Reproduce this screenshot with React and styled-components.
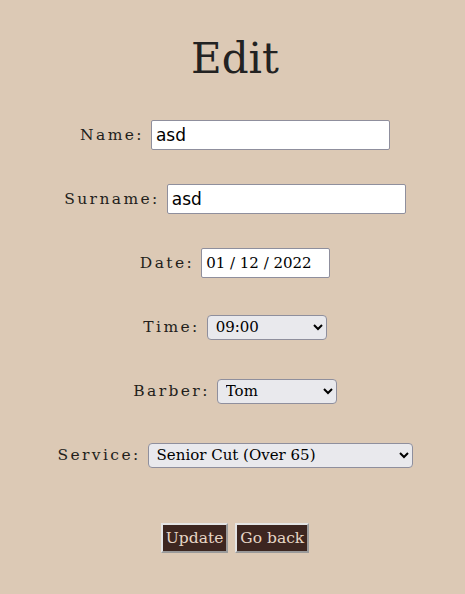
import React from 'react';
import styled, { createGlobalStyle } from 'styled-components';

const GlobalStyle = createGlobalStyle`
	body {
		margin: 0;
		background-color: #dcc9b5;
		font-family: 'DejaVu Serif', 'Liberation Serif', serif;
	}
`;

const Page = styled.div`
	display: flex;
	flex-direction: column;
	align-items: center;
	padding: 33px 0 0 5px;
`;

const Title = styled.h1`
	margin: 0 0 36px;
	font-size: 42px;
	font-weight: 400;
	line-height: 51px;
	color: #222;
`;

const Form = styled.form`
	display: flex;
	flex-direction: column;
	align-items: center;
	gap: 34px;
`;

const Row = styled.div`
	display: flex;
	align-items: center;
	justify-content: center;
	gap: 7px;
	height: 30px;
`;

const Label = styled.label`
	font-size: 15.5px;
	letter-spacing: 2.4px;
	color: #231e1b;
`;

const TextInput = styled.input`
	box-sizing: border-box;
	width: ${(p) => p.$w}px;
	height: 30px;
	padding: 0 4px;
	border: 1px solid #8f8f9d;
	border-radius: 2px;
	background: #fff;
	font-family: ${(p) => (p.$serif ? "'DejaVu Serif', serif" : "'DejaVu Sans', sans-serif")};
	font-size: ${(p) => (p.$serif ? 15 : 17)}px;
	color: #000;
`;

const Select = styled.select`
	box-sizing: border-box;
	width: ${(p) => p.$w}px;
	height: 25px;
	padding: 0 4px;
	border: 1px solid #8f8f9d;
	border-radius: 4px;
	background: #e9e9ed;
	font-family: 'DejaVu Serif', serif;
	font-size: 15px;
	color: #000;
`;

const Buttons = styled.div`
	display: flex;
	gap: 7px;
	margin-top: 19px;
`;

const Button = styled.button`
	height: 30px;
	padding: 0 3px;
	background-color: #3d2620;
	color: #e6d6c6;
	border: 2px solid;
	border-color: #e4e4e4 #9a9a9a #9a9a9a #e4e4e4;
	font-family: 'DejaVu Serif', serif;
	font-size: 15.5px;
`;

const App = () => {
	return (
		<Page>
			<GlobalStyle />
			<Title>Edit</Title>
			<Form>
				<Row>
					<Label>Name:</Label>
					<TextInput $w={239} defaultValue="asd" />
				</Row>
				<Row>
					<Label>Surname:</Label>
					<TextInput $w={239} defaultValue="asd" />
				</Row>
				<Row>
					<Label>Date:</Label>
					<TextInput $w={129} $serif defaultValue="01 / 12 / 2022" />
				</Row>
				<Row>
					<Label>Time:</Label>
					<Select $w={120} defaultValue="09:00">
						<option>09:00</option>
						<option>10:00</option>
					</Select>
				</Row>
				<Row>
					<Label>Barber:</Label>
					<Select $w={120} defaultValue="Tom">
						<option>Tom</option>
					</Select>
				</Row>
				<Row>
					<Label>Service:</Label>
					<Select $w={265} defaultValue="Senior Cut (Over 65)">
						<option>Senior Cut (Over 65)</option>
					</Select>
				</Row>
				<Buttons>
					<Button type="button">Update</Button>
					<Button type="button">Go back</Button>
				</Buttons>
			</Form>
		</Page>
	);
};

export default App;
